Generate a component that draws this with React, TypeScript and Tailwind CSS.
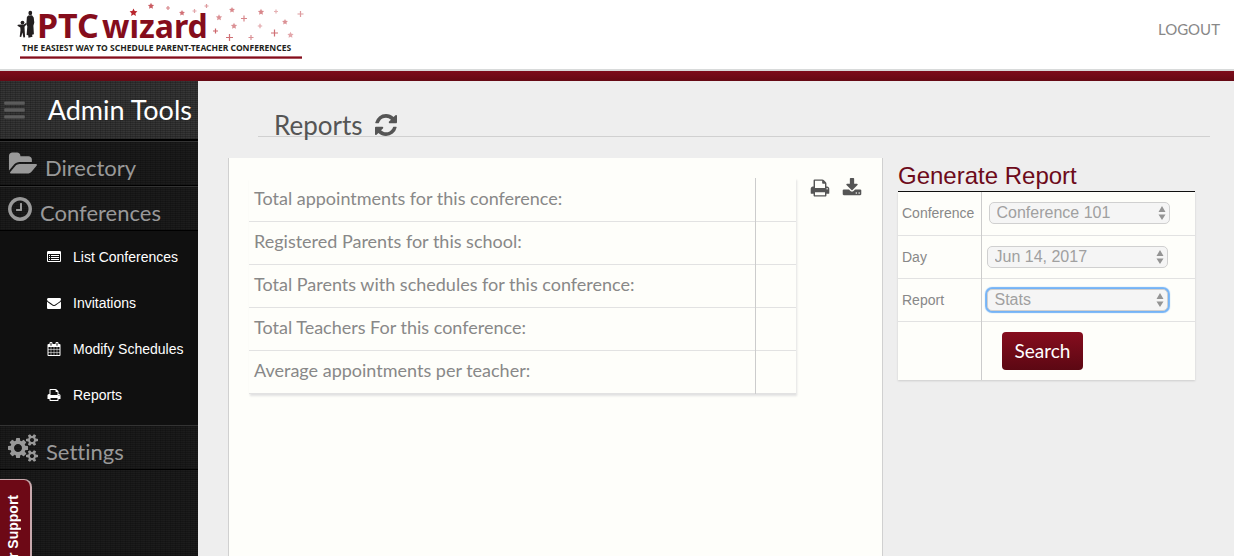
import { useState, type ReactNode } from 'react';

const ICONS = {
  bars: { x: 128, w: 1536, d: 'M1664 1344v128q0 26-19 45t-45 19h-1408q-26 0-45-19t-19-45v-128q0-26 19-45t45-19h1408q26 0 45 19t19 45zm0-512v128q0 26-19 45t-45 19h-1408q-26 0-45-19t-19-45v-128q0-26 19-45t45-19h1408q26 0 45 19t19 45zm0-512v128q0 26-19 45t-45 19h-1408q-26 0-45-19t-19-45v-128q0-26 19-45t45-19h1408q26 0 45 19t19 45z' },
  folder: { x: 0, w: 1943, d: 'M1943 952q0 31-31 66l-336 396q-43 51-120.500 86.500t-143.500 35.500h-1088q-34 0-60.500-13t-26.500-43q0-31 31-66l336-396q43-51 120.500-86.500t143.500-35.500h1088q34 0 60.500 13t26.500 43zm-343-344v160h-832q-94 0-197 47.500t-164 119.500l-337 396-5 6q0-4-.5-12.500t-.5-12.500v-960q0-92 66-158t158-66h320q92 0 158 66t66 158v32h544q92 0 158 66t66 158z' },
  clock: { x: 128, w: 1536, d: 'M1024 544v448q0 14-9 23t-23 9h-320q-14 0-23-9t-9-23v-64q0-14 9-23t23-9h224v-352q0-14 9-23t23-9h64q14 0 23 9t9 23zm416 352q0-148-73-273t-198-198-273-73-273 73-198 198-73 273 73 273 198 198 273 73 273-73 198-198 73-273zm224 0q0 209-103 385.500t-279.500 279.500-385.500 103-385.500-103-279.500-279.500-103-385.500 103-385.500 279.500-279.500 385.500-103 385.500 103 279.500 279.500 103 385.500z' },
  refresh: { x: 128, w: 1536, d: 'M1639 1056q0 5-1 7-64 268-268 434.500t-478 166.500q-146 0-282.500-55t-243.500-157l-129 129q-19 19-45 19t-45-19-19-45v-448q0-26 19-45t45-19h448q26 0 45 19t19 45-19 45l-137 137q71 66 161 102t187 36q134 0 250-65t186-179q11-17 53-117 8-23 30-23h192q13 0 22.500 9.500t9.500 22.500zm25-800v448q0 26-19 45t-45 19h-448q-26 0-45-19t-19-45 19-45l138-138q-148-137-349-137-134 0-250 65t-186 179q-11 17-53 117-8 23-30 23h-199q-13 0-22.500-9.500t-9.500-22.500v-7q65-268 270-434.500t480-166.500q146 0 284 55.500t245 156.500l130-129q19-19 45-19t45 19 19 45z' },
  print: { x: 0, w: 1792, d: 'M448 1536h896v-256h-896v256zm0-640h896v-384h-160q-40 0-68-28t-28-68v-160h-640v640zm1152 64q0-26-19-45t-45-19-45 19-19 45 19 45 45 19 45-19 19-45zm128 0v416q0 13-9.500 22.500t-22.500 9.500h-224v160q0 40-28 68t-68 28h-960q-40 0-68-28t-28-68v-160h-224q-13 0-22.500-9.500t-9.500-22.500v-416q0-79 56.500-135.500t135.500-56.500h64v-544q0-40 28-68t68-28h672q40 0 88 20t76 48l152 152q28 28 48 76t20 88v256h64q79 0 135.500 56.500t56.500 135.500z' },
  download: { x: 0, w: 1792, d: 'M1344 1344q0-26-19-45t-45-19-45 19-19 45 19 45 45 19 45-19 19-45zm256 0q0-26-19-45t-45-19-45 19-19 45 19 45 45 19 45-19 19-45zm128-224v320q0 40-28 68t-68 28h-1472q-40 0-68-28t-28-68v-320q0-40 28-68t68-28h465l135 136q58 56 136 56t136-56l136-136h464q40 0 68 28t28 68zm-325-569q17 41-14 70l-448 448q-18 19-45 19t-45-19l-448-448q-31-29-14-70 17-39 59-39h256v-448q0-26 19-45t45-19h256q26 0 45 19t19 45v448h256q42 0 59 39z' },
  envelope: { x: 0, w: 1792, d: 'M1792 710v794q0 66-47 113t-113 47h-1472q-66 0-113-47t-47-113v-794q44 49 101 87 362 246 497 345 57 42 92.500 65.500t94.500 48 110 24.500h2q51 0 110-24.500t94.500-48 92.500-65.500q170-123 498-345 57-39 100-87zm0-294q0 79-49 151t-122 123q-376 261-468 325-10 7-42.500 31t-54 38.500-52 32.500-57.500 27-50 9h-2q-23 0-50-9t-57.500-27-52-32.500-54-38.500-42.500-31q-91-64-262-182.500t-205-142.500q-62-42-117-115.500t-55-136.500q0-78 41.500-130t118.500-52h1472q65 0 112.500 47t47.500 113z' },
  list: { x: 0, w: 1792, d: 'M160 128h1472q66 0 113 47t47 113v1088q0 66-47 113t-113 47h-1472q-66 0-113-47t-47-113v-1088q0-66 47-113t113-47zm-32 384v864q0 32 32 32h1472q32 0 32-32v-864zm128 128h128v128h-128zm256 0h1024v128h-1024zm-256 256h128v128h-128zm256 0h1024v128h-1024zm-256 256h128v128h-128zm256 0h1024v128h-1024z' },
  calendar: { x: 0, w: 1792, d: 'M192 1664h288v-288h-288v288zm352 0h320v-288h-320v288zm-352-352h288v-320h-288v320zm352 0h320v-320h-320v320zm-352-384h288v-288h-288v288zm736 736h320v-288h-320v288zm-384-736h320v-288h-320v288zm768 736h288v-288h-288v288zm-384-352h320v-320h-320v320zm-352-864v-288q0-13-9.500-22.500t-22.500-9.500h-64q-13 0-22.500 9.500t-9.500 22.500v288q0 13 9.500 22.500t22.500 9.500h64q13 0 22.500-9.500t9.500-22.500zm736 864h288v-320h-288v320zm-384-384h320v-288h-320v288zm384 0h288v-288h-288v288zm32-480v-288q0-13-9.500-22.500t-22.500-9.500h-64q-13 0-22.500 9.500t-9.500 22.500v288q0 13 9.500 22.500t22.500 9.500h64q13 0 22.500-9.500t9.500-22.500zm384-64v1280q0 52-38 90t-90 38h-1408q-52 0-90-38t-38-90v-1280q0-52 38-90t90-38h128v-96q0-66 47-113t113-47h64q66 0 113 47t47 113v96h384v-96q0-66 47-113t113-47h64q66 0 113 47t47 113v96h128q52 0 90 38t38 90z' },
  cogs: { x: 0, w: 1920, d: 'M896 896q0-106-75-181t-181-75-181 75-75 181 75 181 181 75 181-75 75-181zm768 512q0-52-38-90t-90-38-90 38-38 90q0 53 37.500 90.500t90.500 37.500 90.500-37.500 37.500-90.500zm0-1024q0-52-38-90t-90-38-90 38-38 90q0 53 37.500 90.500t90.500 37.500 90.500-37.500 37.500-90.500zm-384 421v185q0 10-7 19.500t-16 10.500l-155 24q-11 35-32 76 34 48 90 115 7 11 7 20 0 12-7 19-23 30-82.500 89.500t-78.500 59.500q-11 0-21-7l-115-90q-37 19-77 31-11 108-23 155-7 24-30 24h-186q-11 0-20-7.500t-10-17.500l-23-153q-34-10-75-31l-118 89q-7 7-20 7-11 0-21-8-144-133-144-160 0-9 7-19 10-14 41-53t47-61q-23-44-35-82l-152-24q-10-1-17-9.500t-7-19.500v-185q0-10 7-19.500t16-10.500l155-24q11-35 32-76-34-48-90-115-7-11-7-20 0-12 7-20 22-30 82-89t79-59q11 0 21 7l115 90q34-18 77-32 11-108 23-154 7-24 30-24h186q11 0 20 7.500t10 17.500l23 153q34 10 75 31l118-89q8-7 20-7 11 0 21 8 144 133 144 160 0 8-7 19-12 16-42 54t-45 60q23 48 34 82l152 23q10 2 17 10.500t7 19.500zm640 533v140q0 16-149 31-12 27-30 52 51 113 51 138 0 4-4 7-122 71-124 71-8 0-46-47t-52-68q-20 2-30 2t-30-2q-14 21-52 68t-46 47q-2 0-124-71-4-3-4-7 0-25 51-138-18-25-30-52-149-15-149-31v-140q0-16 149-31 13-29 30-52-51-113-51-138 0-4 4-7 4-2 35-20t59-34 30-16q8 0 46 46.500t52 67.500q20-2 30-2t30 2q51-71 92-112l6-2q4 0 124 70 4 3 4 7 0 25-51 138 17 23 30 52 149 15 149 31zm0-1024v140q0 16-149 31-12 27-30 52 51 113 51 138 0 4-4 7-122 71-124 71-8 0-46-47t-52-68q-20 2-30 2t-30-2q-14 21-52 68t-46 47q-2 0-124-71-4-3-4-7 0-25 51-138-18-25-30-52-149-15-149-31v-140q0-16 149-31 13-29 30-52-51-113-51-138 0-4 4-7 4-2 35-20t59-34 30-16q8 0 46 46.500t52 67.500q20-2 30-2t30 2q51-71 92-112l6-2q4 0 124 70 4 3 4 7 0 25-51 138 17 23 30 52 149 15 149 31z' },
};

function Icon({ name, className }: { name: keyof typeof ICONS; className: string }) {
  const icon = ICONS[name];
  return (
    <svg viewBox={`${icon.x} 0 ${icon.w} 1792`} className={`shrink-0 ${className}`} fill="currentColor" fillRule="evenodd" aria-hidden="true">
      <path d={icon.d} />
    </svg>
  );
}

const STARS: [number, number, number, number][] = [
  [133.500, 12.500, 4, 1], [151, 6, 3.200, 0.75], [182, 13, 3, 0.65], [219, 17.500, 3.200, 0.5], [232, 10, 3, 0.55],
  [234, 26, 3.200, 0.5], [261, 12, 3.200, 0.55], [285, 22, 3, 0.5], [290.500, 35, 3.200, 0.4],
];
const PLUSES: [number, number, number, number][] = [
  [168, 8, 2, 0.55], [194.500, 11, 2, 0.4], [206.500, 6, 2, 0.45], [215.500, 31, 2.500, 0.7], [229.500, 37.500, 3.500, 0.65], [244, 18.500, 3, 0.55],
  [251, 37.500, 2.500, 0.5], [260, 26, 2.200, 0.4], [274.500, 33, 3.500, 0.65], [276, 11.500, 2, 0.35], [300.500, 14, 3, 0.45],
];

function Logo() {
  return (
    <svg viewBox="0 0 310 69" className="h-[69px] w-[310px]" role="img" aria-label="PTC wizard">
      <g fill="#231f20">
        <ellipse cx="30.300" cy="13" rx="1.900" ry="2.200" />
        <path d="M28.300 15.400l3.700-.2 1.700 2.300.6 5-.9 3.200.5 8.600-1.800.5.400 2-4 .9-.3-2.400-1.600-.2.700-8.600-.9-2.500.5-7z" />
        <circle cx="22.500" cy="22.600" r="1.900" />
        <path d="M21.200 24.600h2.700l2.100-1.500.8 1-2.300 2.600.2 4 .4 6.500-1.700.3-1-5-1.200 4.600-1.500-.3.800-6.600-.2-2.700-2.900-1.700.5-1z" />
      </g>
      <g fill="#850d1c" fontFamily="'Noto Sans', sans-serif" fontWeight="700">
        <text x="37" y="38" fontSize="34">PTC</text>
        <text x="102" y="38" fontSize="32">wizard</text>
      </g>
      <rect x="129" y="7" width="9" height="12" fill="#fff" />
      <text x="22" y="51" fontSize="8.500" fill="#231f20" fontFamily="'Noto Sans', sans-serif" fontWeight="700">
        THE EASIEST WAY TO SCHEDULE PARENT-TEACHER CONFERENCES
      </text>
      <rect x="20" y="56.400" width="282" height="2.300" fill="#850d1c" />
      {STARS.map(([x, y, r, o]) => (
        <path key={`${x}-${y}`} transform={`translate(${x} ${y}) scale(${r})`} opacity={o} fill="#b8242c"
          d="M0-1 .3-.38.98-.3.480.18.6.85 0 .52-.6.85-.48.180-.98-.3-.3-.38z" />
      ))}
      {PLUSES.map(([x, y, r, o]) => (
        <path key={`${x}-${y}`} opacity={o} stroke="#b8242c" strokeWidth="1.200" d={`M${x - r} ${y}h${r * 2}M${x} ${y - r}v${r * 2}`} />
      ))}
    </svg>
  );
}

const WEAVE =
  'bg-[repeating-linear-gradient(90deg,rgba(0,0,0,0.16)_0px_1px,transparent_1px_2px,rgba(0,0,0,0.08)_2px_3px,transparent_3px_5px),repeating-linear-gradient(0deg,rgba(0,0,0,0.22)_0px_1px,transparent_1px_2px)]';

function Section({ icon, size, children }: { icon: keyof typeof ICONS; size: string; children: ReactNode }) {
  return (
    <a href="#" className={`flex h-[45px] items-center gap-2 border-t border-b border-t-[#333] border-b-black bg-[#1c1c1c] pl-2 text-[22px] text-[#999] ${WEAVE}`}>
      <Icon name={icon} className={size} />
      <span className="pt-2">{children}</span>
    </a>
  );
}

const SUBMENU: { icon: keyof typeof ICONS; label: string }[] = [
  { icon: 'list', label: 'List Conferences' },
  { icon: 'envelope', label: 'Invitations' },
  { icon: 'calendar', label: 'Modify Schedules' },
  { icon: 'print', label: 'Reports' },
];

const STATS = [
  'Total appointments for this conference:',
  'Registered Parents for this school:',
  'Total Parents with schedules for this conference:',
  'Total Teachers For this conference:',
  'Average appointments per teacher:',
];

const FIELDS = [
  { id: 'conference', label: 'Conference', options: ['Conference 101'], pad: 'pl-[7px]', focus: '' },
  { id: 'day', label: 'Day', options: ['Jun 14, 2017'], pad: 'pl-[5px]', focus: '' },
  { id: 'report', label: 'Report', options: ['Stats'], pad: 'pl-[5px]', focus: 'shadow-[0_0_1px_2px_#74b3f6]' },
];

function Field({ field }: { field: (typeof FIELDS)[number] }) {
  const [value, setValue] = useState(field.options[0]);
  return (
    <tr className="h-[43px] border-b border-[#e2e2e2]">
      <th scope="row" className="border-r border-[#ccc] pl-1 text-left align-middle text-sm font-normal text-[#888]">
        <label htmlFor={field.id}>{field.label}</label>
      </th>
      <td className={field.pad}>
        <span className="relative block w-[181px]">
          <select
            id={field.id}
            value={value}
            onChange={(e) => setValue(e.target.value)}
            className={`block h-[22px] w-full appearance-none rounded-[5px] border border-[#d0d0d0] bg-[#f5f5f5] px-[7px] text-base leading-5 text-[#a0a0a0] outline-none ${field.focus}`}
          >
            {field.options.map((o) => <option key={o}>{o}</option>)}
          </select>
          <svg viewBox="0 0 8 14" className="pointer-events-none absolute top-1 right-1 h-[14px] w-2" fill="#949494" aria-hidden="true">
            <path d="M4 0l3.500 6h-7zM4 14l3.500-5.500h-7z" />
          </svg>
        </span>
      </td>
    </tr>
  );
}

export default function App() {
  return (
    <div className="flex h-screen flex-col overflow-hidden bg-[#eee] font-['Lato',sans-serif] [font-variant-ligatures:none]">
      <header className="flex h-[71px] shrink-0 items-start justify-between border-b-2 border-[#d8dada] bg-white">
        <Logo />
        <a href="#" className="pt-[18px] pr-[14px] text-[15px] text-[#888]">LOGOUT</a>
      </header>
      <div className="h-[10px] shrink-0 bg-linear-to-b from-[#7d0c1b] to-[#650914]" />
      <div className="flex min-h-0 flex-1">
        <aside className={`relative w-[198px] shrink-0 bg-[#1c1c1c] ${WEAVE}`}>
          <div className={`flex h-[60px] items-center justify-between border-b-2 border-black bg-[#363636] pr-[6px] pb-px pl-1 ${WEAVE}`}>
            <button type="button" aria-label="Toggle menu" className="text-[#5c5c5c]">
              <Icon name="bars" className="h-6 w-[21px]" />
            </button>
            <h2 className="text-[27px] leading-8 text-white">Admin Tools</h2>
          </div>
          <nav>
            <Section icon="folder" size="h-7 w-[29px]">Directory</Section>
            <Section icon="clock" size="h-7 w-6">Conferences</Section>
            <ul className="flex flex-col bg-[#101010] py-[5px] font-['Liberation_Sans',sans-serif]">
              {SUBMENU.map((item) => (
                <li key={item.label}>
                  <a href="#" className="flex h-[46px] items-center gap-3 pb-1 pl-[47px] text-sm text-white">
                    <Icon name={item.icon} className="h-[14px] w-[14px]" />
                    {item.label}
                  </a>
                </li>
              ))}
            </ul>
            <Section icon="cogs" size="h-7 w-[30px]">Settings</Section>
          </nav>
          <button type="button" className="absolute top-[398px] left-0 flex h-[180px] w-8 items-start justify-center rounded-tr-lg border-t border-r-2 border-[#c9a9ad] bg-[#6d0916] pt-[15px] pr-1 font-['Liberation_Sans',sans-serif] text-sm font-bold text-white">
            <span className="rotate-180 whitespace-nowrap [writing-mode:vertical-rl]">Customer Support</span>
          </button>
        </aside>
        <main className="flex min-w-0 flex-1 flex-col">
          <div className="mt-6 mr-6 ml-[60px] flex h-8 items-center gap-3 border-b border-[#d0d0d0] pt-2 pl-4 text-[#555]">
            <h1 className="text-[26px] leading-8">Reports</h1>
            <Icon name="refresh" className="h-[26px] w-[22px]" />
          </div>
          <div className="mt-[21px] mr-[39px] ml-[30px] flex min-h-0 flex-1 items-start gap-[15px]">
            <section className="flex flex-1 items-start gap-[14px] self-stretch border-x border-[#d0d0d0] bg-[#fefefa] p-5">
              <table className="flex-1 border-collapse text-lg text-[#888] shadow-[1px_2px_2px_#e2e2e2]">
                <tbody>
                  {STATS.map((label) => (
                    <tr key={label} className="h-[43px] border-b border-[#e2e2e2]">
                      <th scope="row" className="border-r border-[#ccc] pb-[3px] pl-[5px] text-left font-normal">{label}</th>
                      <td className="w-[41px]" />
                    </tr>
                  ))}
                </tbody>
              </table>
              <div className="flex gap-3 text-[#555]">
                <button type="button" aria-label="Print"><Icon name="print" className="h-5 w-5" /></button>
                <button type="button" aria-label="Download"><Icon name="download" className="h-5 w-5" /></button>
              </div>
            </section>
            <form className="w-[297px] shrink-0 font-['Liberation_Sans',sans-serif]" onSubmit={(e) => e.preventDefault()}>
              <h2 className="border-b border-black pt-[3px] text-2xl leading-[30px] text-[#6d0a1a]">Generate Report</h2>
              <table className="w-full border-collapse bg-[#fefefa] shadow-[0_1px_2px_#ccc]">
                <tbody>
                  {FIELDS.map((f) => <Field key={f.id} field={f} />)}
                  <tr className="h-[59px]">
                    <th className="w-[83px] border-r border-[#ccc]" />
                    <td className="pl-5">
                      <button type="submit" className="h-[38px] rounded bg-linear-to-b from-[#860d1e] to-[#5c0813] px-[13px] font-['Lato',sans-serif] text-[19px] text-white">Search</button>
                    </td>
                  </tr>
                </tbody>
              </table>
            </form>
          </div>
        </main>
      </div>
    </div>
  );
}
